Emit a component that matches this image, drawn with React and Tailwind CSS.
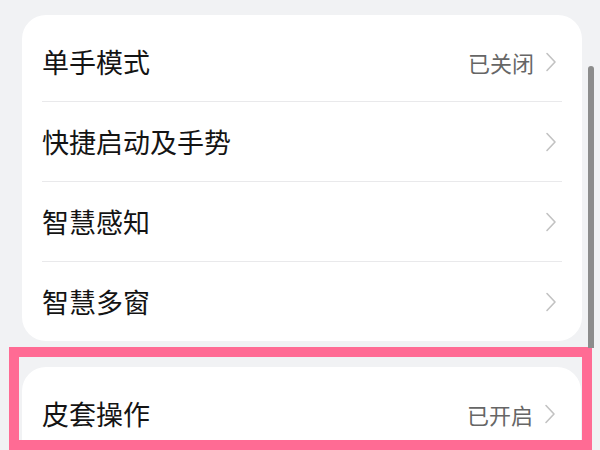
const font = { fontFamily: '"Noto Sans CJK SC", "Noto Sans", sans-serif' }

const rows = [
  { label: '单手模式', value: '已关闭' },
  { label: '快捷启动及手势' },
  { label: '智慧感知' },
  { label: '智慧多窗' },
]

function Chevron() {
  return (
    <svg width="12" height="22" viewBox="0 0 12 22" fill="none" className="shrink-0">
      <path d="M2 2.5 L10 11 L2 19.5" stroke="#c2c2c2" strokeWidth="1.6" strokeLinecap="round" strokeLinejoin="round" />
    </svg>
  )
}

function Row({ label, value }) {
  return (
    <div className="flex items-center h-[79px] pl-5 pr-[25px]">
      <span className="text-[27px] text-[#141414] leading-none">{label}</span>
      <div className="ml-auto flex items-center gap-[11px]">
        {value && <span className="text-[22px] text-[#666666] leading-none">{value}</span>}
        <Chevron />
      </div>
    </div>
  )
}

export default function App() {
  return (
    <div className="relative h-[450px] w-[600px] overflow-hidden bg-[#f1f2f4]" style={font}>
      <div className="pt-[15px] pl-[22px] pr-[18px]">
        <div className="bg-white rounded-[24px] pt-[7px]">
          {rows.map((r, i) => (
            <div key={r.label}>
              <Row {...r} />
              {i < rows.length - 1 && <div className="mx-5 h-px bg-[#e9e9eb]" />}
            </div>
          ))}
        </div>
      </div>

      <div className="absolute right-[6px] top-[66px] w-[6px] h-[282px] rounded-t-full bg-[#8c8c8c]" />

      <div className="mt-[6px] ml-[9px] mr-[8px] h-[103px] border-[10px] border-[#ff6b94] bg-[#f1f2f4] pt-[10px] pl-[3px] pr-[1px] overflow-hidden">
        <div className="bg-white rounded-t-[24px] pt-[7px]">
          <Row label="皮套操作" value="已开启" />
        </div>
      </div>
    </div>
  )
}
